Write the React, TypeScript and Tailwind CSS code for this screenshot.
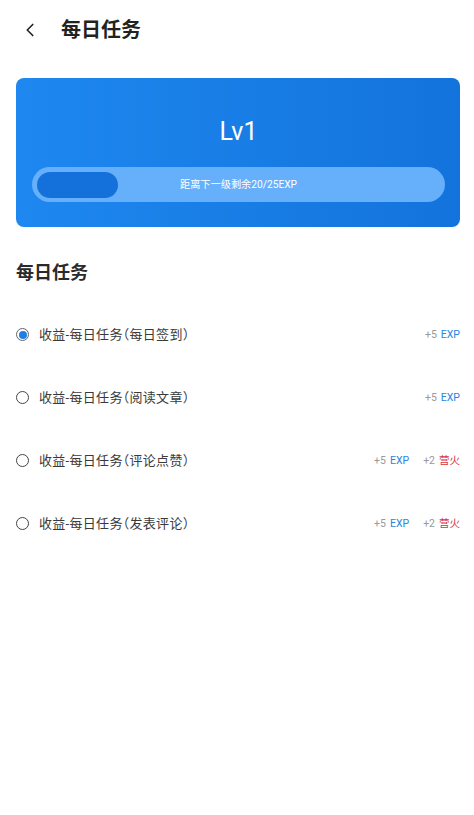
import { ChevronLeft } from "lucide-react";

interface Task {
  name: string;
  exp: number;
  fire?: number;
  done?: boolean;
}

const TASKS: Task[] = [
  { name: "收益-每日任务（每日签到）", exp: 5, done: true },
  { name: "收益-每日任务（阅读文章）", exp: 5 },
  { name: "收益-每日任务（评论点赞）", exp: 5, fire: 2 },
  { name: "收益-每日任务（发表评论）", exp: 5, fire: 2 },
];

const FONT = "font-['Roboto','Noto_Sans_CJK_SC',sans-serif]";

export default function App() {
  return (
    <div className={`min-h-[815px] w-[474px] bg-white ${FONT}`}>
      {/* header */}
      <div className="flex h-[60px] items-center pl-[19px]">
        <ChevronLeft className="h-[22px] w-[22px] text-[#222]" strokeWidth={1.8} />
        <h1 className="ml-[20px] text-[20px] font-bold text-[#222]">每日任务</h1>
      </div>

      {/* level card */}
      <div className="ml-[16px] mr-[14px] mt-[18px] flex h-[149px] flex-col items-center rounded-[8px] bg-gradient-to-r from-[#1E88F0] to-[#1373DC] pl-[16px] pr-[15px]">
        <div className="mt-[38px] text-[25px] leading-[32px] text-white">Lv1</div>
        <div className="relative mt-[19px] flex h-[35px] w-full items-center rounded-full bg-[#66AFFB] px-[5px]">
          <div className="h-[26px] w-[81px] rounded-full bg-[#1471DB]" />
          <span className="absolute inset-0 flex items-center justify-center text-[10.2px] text-white">
            距离下一级剩余20/25EXP
          </span>
        </div>
      </div>

      {/* section */}
      <h2 className="ml-[16px] mt-[34px] text-[18px] font-bold leading-[24px] text-[#2a2a2a]">每日任务</h2>

      <div className="mt-[18px] flex flex-col">
        {TASKS.map((t, i) => (
          <div key={i} className="flex h-[63px] items-center pl-[16px] pr-[14px]">
            {t.done ? (
              <span className="flex h-[13px] w-[13px] items-center justify-center rounded-full border border-[#666]">
                <span className="h-[8px] w-[8px] rounded-full bg-[#1E7FE8]" />
              </span>
            ) : (
              <span className="h-[13px] w-[13px] rounded-full border-[1.5px] border-[#444]" />
            )}
            <span className="ml-[10px] flex-1 text-[13px] tracking-[0.3px] text-[#3a3a3a] [font-feature-settings:'halt']">
              {t.name}
            </span>
            <span className="text-[10.5px] text-[#999]">+{t.exp}</span>
            <span className="ml-[4px] text-[10.5px] text-[#2A86DE]">EXP</span>
            {t.fire !== undefined && (
              <>
                <span className="ml-[14px] text-[10.5px] text-[#999]">+{t.fire}</span>
                <span className="ml-[4px] text-[10.5px] text-[#D63440]">营火</span>
              </>
            )}
          </div>
        ))}
      </div>
    </div>
  );
}
